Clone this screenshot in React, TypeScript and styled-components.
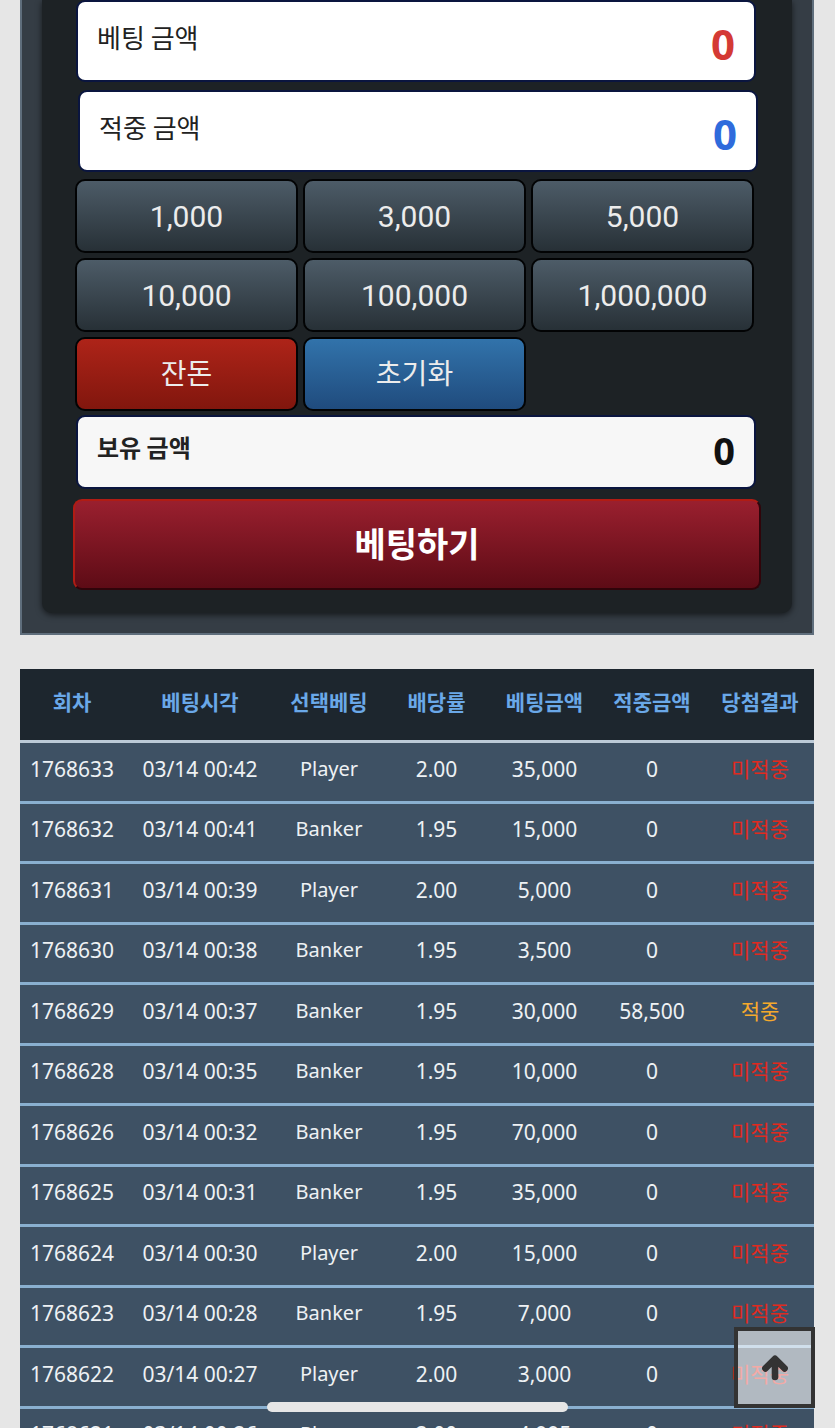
import React from 'react';
import styled, { createGlobalStyle, css } from 'styled-components';

const GlobalStyle = createGlobalStyle`
  *, *::before, *::after { box-sizing: border-box; }
  html { scrollbar-width: none; }
  body {
    margin: 0;
    background: #e6e6e6;
    font-family: 'Noto Sans CJK KR', 'Noto Sans', sans-serif;
  }
`;

const Page = styled.main`
  display: flex;
  flex-direction: column;
  gap: 34px;
  padding: 0 21px 0 20px;
`;

const SlipFrame = styled.section`
  padding: 0 20px 20px;
  background: #353d45;
  border: 2px solid #5f6e7c;
  border-top: 0;
`;

const Slip = styled.form`
  display: flex;
  flex-direction: column;
  padding: 0 31px 23px;
  background: #1d2225;
  border-radius: 0 0 10px 10px;
  box-shadow: 0 2px 6px rgba(0, 0, 0, 0.6);
`;

const AmountRow = styled.label<{ $shifted?: boolean; $strong?: boolean }>`
  display: flex;
  justify-content: space-between;
  height: ${p => (p.$strong ? 74 : 82)}px;
  margin: ${p => (p.$shifted ? '8px 3px 0 5px' : '0 5px 0 3px')};
  padding: 0 19px;
  background: ${p => (p.$strong ? '#f7f7f7' : '#fff')};
  border: 2px solid #0a153f;
  border-radius: 9px;
  color: #222;
  font-size: ${p => (p.$strong ? 24 : 26)}px;
  font-weight: ${p => (p.$strong ? 700 : 400)};
  line-height: ${p => (p.$strong ? 60 : 70)}px;
`;

const Amount = styled.input<{ $color: string; $compact?: boolean }>`
  width: 50%;
  min-width: 0;
  padding: ${p => (p.$compact ? '0 0 4px' : '4px 0 0')};
  border: 0;
  outline: 0;
  background: transparent;
  color: ${p => p.$color};
  font-family: 'Open Sans', 'Noto Sans', sans-serif;
  font-size: ${p => (p.$compact ? 38 : 42)}px;
  font-weight: 700;
  text-align: right;
`;

const KeyGrid = styled.div`
  display: grid;
  grid-template-columns: repeat(3, 1fr);
  gap: 5px;
  margin: 7px 7px 4px 2px;
`;

const tones = {
  slate: css`background-image: linear-gradient(#4e5d69, #262f35);`,
  red: css`background-image: linear-gradient(#af2419, #80160d);`,
  blue: css`background-image: linear-gradient(#3274ac, #1f4a7c);`,
};

const Key = styled.button<{ $tone: keyof typeof tones }>`
  height: 74px;
  padding: 2px 0 0;
  ${p => tones[p.$tone]}
  background-origin: border-box;
  border: 2px solid #020304;
  border-radius: 10px;
  color: #ececec;
  font-family: Roboto, 'Noto Sans CJK KR', sans-serif;
  font-size: ${p => (p.$tone === 'slate' ? 30 : 28)}px;
  font-weight: 400;
  line-height: 68px;
  cursor: pointer;
`;

const Submit = styled.button`
  height: 91px;
  margin-top: 10px;
  padding: 0 0 3px;
  background: linear-gradient(#9b202f, #5c0b15) border-box;
  border: 2px solid;
  border-color: #b01c14 #30040a #30040a #b01c14;
  border-radius: 9px;
  color: #fff;
  font-family: inherit;
  font-size: 34px;
  font-weight: 700;
  line-height: 84px;
  cursor: pointer;
`;

const History = styled.table`
  width: 100%;
  table-layout: fixed;
  border-collapse: collapse;
  border-spacing: 0;
  font-family: 'Noto Sans', 'Noto Sans CJK KR', sans-serif;
  font-size: 21px;
  text-align: center;
  white-space: nowrap;
`;

const HeadCell = styled.th`
  height: 74px;
  padding: 0 0 10px;
  background: #1d262e;
  box-shadow: inset 0 -3px #bccad7;
  color: #6aa8e8;
  font-family: 'Noto Sans CJK KR', sans-serif;
  font-weight: 700;
  line-height: 30px;
`;

const Row = styled.tr`
  height: 61px;
  &:nth-child(even) { height: 60px; }
`;

const Cell = styled.td<{ $tone?: 'lose' | 'win' }>`
  padding: 0 0 10px;
  background: #3e5164;
  box-shadow: inset 0 -3px #8ab0d0;
  color: ${p => (p.$tone === 'lose' ? '#e02a20' : p.$tone === 'win' ? '#f5a92c' : '#eef1f4')};
  line-height: 30px;
`;

const SideCell = styled(Cell)`
  font-size: 20px;
`;

const TopButton = styled.button`
  position: fixed;
  right: 20px;
  bottom: 20px;
  display: flex;
  align-items: center;
  justify-content: center;
  width: 81px;
  height: 81px;
  padding: 0;
  background: rgba(255, 255, 255, 0.6);
  border: 4px solid #333;
  cursor: pointer;
`;

const HomeBar = styled.div`
  position: fixed;
  bottom: 16px;
  left: 32%;
  right: 32%;
  height: 10px;
  background: #e6e6e6;
  border-radius: 5px;
`;

const stakes = ['1,000', '3,000', '5,000', '10,000', '100,000', '1,000,000'];

const columns: [string, number][] = [
  ['회차', 104], ['베팅시각', 152], ['선택베팅', 106], ['배당률', 109],
  ['베팅금액', 107], ['적중금액', 108], ['당첨결과', 108],
];

const bets = [
  ['1768633', '00:42', 'Player', '35,000', '0'],
  ['1768632', '00:41', 'Banker', '15,000', '0'],
  ['1768631', '00:39', 'Player', '5,000', '0'],
  ['1768630', '00:38', 'Banker', '3,500', '0'],
  ['1768629', '00:37', 'Banker', '30,000', '58,500'],
  ['1768628', '00:35', 'Banker', '10,000', '0'],
  ['1768626', '00:32', 'Banker', '70,000', '0'],
  ['1768625', '00:31', 'Banker', '35,000', '0'],
  ['1768624', '00:30', 'Player', '15,000', '0'],
  ['1768623', '00:28', 'Banker', '7,000', '0'],
  ['1768622', '00:27', 'Player', '3,000', '0'],
  ['1768621', '00:26', 'Player', '4,995', '0'],
];

export default function App() {
  return (
    <>
      <GlobalStyle />
      <Page>
        <SlipFrame>
          <Slip onSubmit={e => e.preventDefault()}>
            <AmountRow>
              베팅 금액
              <Amount $color="#d43a34" defaultValue="0" />
            </AmountRow>
            <AmountRow $shifted>
              적중 금액
              <Amount $color="#2f6bdc" defaultValue="0" readOnly />
            </AmountRow>
            <KeyGrid>
              {stakes.map(s => <Key key={s} type="button" $tone="slate">{s}</Key>)}
              <Key type="button" $tone="red">잔돈</Key>
              <Key type="button" $tone="blue">초기화</Key>
            </KeyGrid>
            <AmountRow $strong>
              보유 금액
              <Amount $color="#111" $compact defaultValue="0" readOnly />
            </AmountRow>
            <Submit type="submit">베팅하기</Submit>
          </Slip>
        </SlipFrame>
        <History>
          <colgroup>
            {columns.map(([name, w]) => <col key={name} width={w} />)}
          </colgroup>
          <thead>
            <tr>{columns.map(([name]) => <HeadCell key={name} scope="col">{name}</HeadCell>)}</tr>
          </thead>
          <tbody>
            {bets.map(([id, time, side, stake, win]) => (
              <Row key={id}>
                <Cell>{id}</Cell>
                <Cell>03/14 {time}</Cell>
                <SideCell>{side}</SideCell>
                <Cell>{side === 'Player' ? '2.00' : '1.95'}</Cell>
                <Cell>{stake}</Cell>
                <Cell>{win}</Cell>
                <Cell $tone={win === '0' ? 'lose' : 'win'}>{win === '0' ? '미적중' : '적중'}</Cell>
              </Row>
            ))}
          </tbody>
        </History>
      </Page>
      <HomeBar />
      <TopButton type="button" aria-label="맨 위로">
        <svg width="26" height="26" viewBox="0 0 26 26" fill="none" stroke="#333" strokeWidth="6.6" strokeLinecap="round" strokeLinejoin="round" aria-hidden="true">
          <path d="M3.4 13.4 13 3.8l9.6 9.6M13 5v17" />
        </svg>
      </TopButton>
    </>
  );
}
